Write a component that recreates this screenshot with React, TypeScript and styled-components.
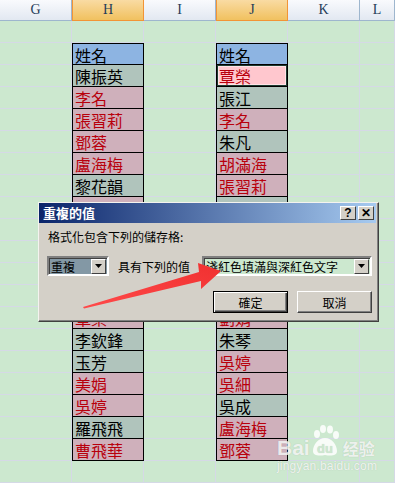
import React from 'react';
import styled, { createGlobalStyle, css } from 'styled-components';

const GlobalStyle = createGlobalStyle`
  html, body {
    margin: 0;
    padding: 0;
    overflow: hidden;
  }
`;

const CJK = `'Noto Sans CJK TC', 'Noto Sans CJK SC', sans-serif`;

type Kind = 'head' | 'uniq' | 'dup' | 'sel';

const Page = styled.div`
  position: relative;
  width: 395px;
  height: 483px;
  overflow: hidden;
  background-color: #cce8cf;
`;

const ColumnBar = styled.div`
  display: grid;
  grid-template-columns: repeat(5, 72px) 35px;
  height: 21px;
`;

const ColumnHead = styled.div<{ $active?: boolean }>`
  box-sizing: border-box;
  display: flex;
  align-items: center;
  justify-content: center;
  font-family: 'Liberation Serif', serif;
  font-size: 14px;
  line-height: 16px;
  color: #243c58;
  border-right: 1px solid #9eb6ce;
  border-bottom: 1px solid #9eb6ce;
  background: linear-gradient(#f9fafd, #e2e8f1);
  ${(p) =>
    p.$active &&
    css`
      background: linear-gradient(#f9dba3, #f1c15f);
      border-right: 1px solid #f29436;
      border-left: 1px solid #f29436;
      border-bottom: 1px solid #f29436;
    `}
`;

const Sheet = styled.div`
  display: grid;
  grid-template-columns: repeat(5, 72px) 35px;
  grid-auto-rows: 22px;
`;

const Cell = styled.div`
  box-sizing: border-box;
  border-right: 1px solid #d5d9e6;
  border-bottom: 1px solid #d5d9e6;
`;

const cellColors: Record<Kind, { bg: string; fg: string }> = {
  head: { bg: '#8db4e2', fg: '#000' },
  uniq: { bg: '#b0c4bc', fg: '#000' },
  dup: { bg: '#cfb0bb', fg: '#b8000c' },
  sel: { bg: '#ffc7ce', fg: '#b8000c' },
};

const NameCell = styled.div<{ $kind: Kind }>`
  box-sizing: border-box;
  display: flex;
  align-items: center;
  padding: 2px 0 0 2px;
  font-family: ${CJK};
  font-size: 16px;
  line-height: 17px;
  white-space: nowrap;
  background-color: ${(p) => cellColors[p.$kind].bg};
  color: ${(p) => cellColors[p.$kind].fg};
  border-left: 1px solid #000;
  border-right: 1px solid #000;
  border-bottom: 1px solid #000;
  ${(p) => p.$kind === 'head' && css`border-top: 1px solid #000;`}
  ${(p) =>
    p.$kind === 'sel' &&
    css`
      box-shadow: inset 0 0 0 1px #1d3b30, inset 0 0 0 2px #ffffff80;
    `}
`;

const Dialog = styled.div`
  position: absolute;
  left: 38px;
  top: 202px;
  width: 341px;
  height: 120px;
  box-sizing: border-box;
  background-color: #d4d0c8;
  border: 1px solid;
  border-color: #f4f3ef #404040 #404040 #f4f3ef;
  box-shadow: inset -1px -1px 0 #808080;
  display: flex;
  flex-direction: column;
`;

const TitleBar = styled.div`
  height: 20px;
  margin: 0 2px 0 0;
  display: flex;
  align-items: center;
  justify-content: space-between;
  padding: 0 2px 0 4px;
  background: linear-gradient(to right, #0a246a, #a6caf0);
`;

const Title = styled.span`
  font-family: ${CJK};
  font-size: 13px;
  line-height: 16px;
  font-weight: bold;
  color: #fff;
`;

const TitleButtons = styled.div`
  display: flex;
  gap: 2px;
`;

const TitleButton = styled.div`
  width: 16px;
  height: 14px;
  box-sizing: border-box;
  display: flex;
  align-items: center;
  justify-content: center;
  background-color: #d4d0c8;
  border: 1px solid;
  border-color: #fff #404040 #404040 #fff;
  font-family: 'Liberation Sans', sans-serif;
  font-size: 12px;
  font-weight: bold;
  line-height: 12px;
  color: #000;
`;

const Body = styled.div`
  display: flex;
  flex-direction: column;
  padding: 6px 6px 0 8px;
  font-family: ${CJK};
  font-size: 12px;
  line-height: 15px;
  color: #000;
`;

const Caption = styled.div`
  height: 16px;
  line-height: 16px;
  padding-left: 1px;
`;

const ValueRow = styled.div`
  display: flex;
  align-items: center;
  margin-top: 11px;
  height: 20px;
`;

const Combo = styled.div<{ $width: number; $bg: string }>`
  width: ${(p) => p.$width}px;
  height: 20px;
  box-sizing: border-box;
  display: flex;
  align-items: center;
  justify-content: space-between;
  padding: 0 1px 0 2px;
  background-color: ${(p) => p.$bg};
  border: 2px solid;
  border-color: #808080 #fff #fff #808080;
  box-shadow: inset 1px 1px 0 #404040;
`;

const ComboText = styled.span`
  line-height: 15px;
  white-space: nowrap;
`;

const ComboArrow = styled.div`
  width: 15px;
  height: 15px;
  box-sizing: border-box;
  display: flex;
  align-items: center;
  justify-content: center;
  background-color: #d4d0c8;
  border: 1px solid;
  border-color: #fff #404040 #404040 #fff;
`;

const RowLabel = styled.span`
  margin-left: 9px;
`;

const ButtonRow = styled.div`
  display: flex;
  justify-content: flex-end;
  gap: 9px;
  margin-top: 15px;
`;

const Button = styled.div<{ $primary?: boolean }>`
  width: 75px;
  height: 22px;
  box-sizing: border-box;
  display: flex;
  align-items: center;
  justify-content: center;
  background-color: #d4d0c8;
  border: 1px solid;
  border-color: ${(p) => (p.$primary ? '#000' : '#fff #404040 #404040 #fff')};
  box-shadow: ${(p) =>
    p.$primary
      ? 'inset 1px 1px 0 #fff, inset -1px -1px 0 #404040, inset -2px -2px 0 #808080'
      : 'inset -1px -1px 0 #808080'};
`;

const Overlay = styled.svg`
  position: absolute;
  left: 0;
  top: 0;
  pointer-events: none;
`;

const Watermark = styled.div`
  position: absolute;
  left: 277px;
  top: 425px;
  display: flex;
  flex-direction: column;
  color: rgba(255, 255, 255, 0.8);
  text-shadow: 0 0 1px rgba(120, 130, 120, 0.4);
`;

const BrandLine = styled.div`
  display: flex;
  align-items: flex-end;
  height: 32px;
`;

const BrandWord = styled.span`
  font-family: 'Liberation Sans', sans-serif;
  font-weight: bold;
  font-size: 21px;
  line-height: 18px;
`;

const BrandCn = styled.span`
  font-family: ${CJK};
  font-weight: bold;
  font-size: 16px;
  line-height: 18px;
  margin-left: 3px;
`;

const Domain = styled.span`
  font-family: 'Liberation Sans', sans-serif;
  font-size: 12px;
  line-height: 14px;
  margin-top: 2px;
  letter-spacing: 0.2px;
`;

// rows 8-12 sit fully under the dialog, so only their fill shows
const H: [string, Kind][] = [
  ['姓名', 'head'],
  ['陳振英', 'uniq'],
  ['李名', 'dup'],
  ['張習莉', 'dup'],
  ['鄧蓉', 'dup'],
  ['盧海梅', 'dup'],
  ['黎花韻', 'uniq'],
  ['', 'dup'],
  ['', 'uniq'],
  ['', 'dup'],
  ['', 'uniq'],
  ['', 'uniq'],
  ['覃榮', 'dup'],
  ['李欽鋒', 'uniq'],
  ['玉芳', 'uniq'],
  ['美娟', 'dup'],
  ['吳婷', 'dup'],
  ['羅飛飛', 'uniq'],
  ['曹飛華', 'dup'],
];

const J: [string, Kind][] = [
  ['姓名', 'head'],
  ['覃榮', 'sel'],
  ['張江', 'uniq'],
  ['李名', 'dup'],
  ['朱凡', 'uniq'],
  ['胡滿海', 'dup'],
  ['張習莉', 'dup'],
  ['', 'uniq'],
  ['', 'dup'],
  ['', 'uniq'],
  ['', 'dup'],
  ['', 'uniq'],
  ['劉娟', 'dup'],
  ['朱琴', 'uniq'],
  ['吳婷', 'dup'],
  ['吳細', 'dup'],
  ['吳成', 'uniq'],
  ['盧海梅', 'dup'],
  ['鄧蓉', 'dup'],
];

const COLUMNS = ['G', 'H', 'I', 'J', 'K', 'L'];
const ROWS = 21;

function renderCell(row: number, col: number) {
  const key = `${row}-${col}`;
  const list = col === 1 ? H : col === 3 ? J : null;
  const item = list && row >= 1 && row <= list.length ? list[row - 1] : null;
  if (item) {
    return (
      <NameCell key={key} $kind={item[1]}>
        {item[0]}
      </NameCell>
    );
  }
  return <Cell key={key} />;
}

function Paw() {
  return (
    <svg width="30" height="32" viewBox="0 0 30 32">
      <g fill="rgba(255,255,255,0.85)">
        <ellipse cx="7" cy="9" rx="3" ry="4" />
        <ellipse cx="13" cy="4" rx="3" ry="4" />
        <ellipse cx="20" cy="4.5" rx="3" ry="4" />
        <ellipse cx="26" cy="10" rx="3" ry="4" />
        <path d="M15 13 C8 13 3 20 3 26 C3 31 9 31 15 30 C21 31 27 31 27 26 C27 20 22 13 15 13 Z" />
      </g>
      <text
        x="15"
        y="28"
        textAnchor="middle"
        fontFamily="Liberation Sans, sans-serif"
        fontWeight="bold"
        fontSize="13"
        fill="#cce8cf"
      >
        du
      </text>
    </svg>
  );
}

export default function App() {
  return (
    <Page>
      <GlobalStyle />
      <ColumnBar>
        {COLUMNS.map((c) => (
          <ColumnHead key={c} $active={c === 'H' || c === 'J'}>
            {c}
          </ColumnHead>
        ))}
      </ColumnBar>
      <Sheet>
        {Array.from({ length: ROWS }).map((_, r) =>
          COLUMNS.map((_, c) => renderCell(r, c))
        )}
      </Sheet>

      <Dialog>
        <TitleBar>
          <Title>重複的值</Title>
          <TitleButtons>
            <TitleButton>?</TitleButton>
            <TitleButton>✕</TitleButton>
          </TitleButtons>
        </TitleBar>
        <Body>
          <Caption>格式化包含下列的儲存格:</Caption>
          <ValueRow>
            <Combo $width={62} $bg="#8398a5">
              <ComboText>重複</ComboText>
              <ComboArrow>
                <svg width="7" height="4" viewBox="0 0 7 4">
                  <path d="M0 0h7L3.5 4z" fill="#000" />
                </svg>
              </ComboArrow>
            </Combo>
            <RowLabel>具有下列的值</RowLabel>
            <Combo $width={170} $bg="#cce8cf" style={{ marginLeft: 'auto' }}>
              <ComboText>淺紅色填滿與深紅色文字</ComboText>
              <ComboArrow>
                <svg width="7" height="4" viewBox="0 0 7 4">
                  <path d="M0 0h7L3.5 4z" fill="#000" />
                </svg>
              </ComboArrow>
            </Combo>
          </ValueRow>
          <ButtonRow>
            <Button $primary>確定</Button>
            <Button>取消</Button>
          </ButtonRow>
        </Body>
      </Dialog>

      <Overlay width="395" height="483" viewBox="0 0 395 483">
        <defs>
          <linearGradient id="arrowFill" x1="0" y1="1" x2="1" y2="0">
            <stop offset="0" stopColor="#ff4a4a" />
            <stop offset="1" stopColor="#f03030" />
          </linearGradient>
        </defs>
        <polygon
          points="83,307 199,272 198,263 221,271 201,289 201,281 84,308.5"
          fill="url(#arrowFill)"
        />
      </Overlay>

      <Watermark>
        <BrandLine>
          <BrandWord>Bai</BrandWord>
          <Paw />
          <BrandCn>经验</BrandCn>
        </BrandLine>
        <Domain>jingyan.baidu.com</Domain>
      </Watermark>
    </Page>
  );
}
